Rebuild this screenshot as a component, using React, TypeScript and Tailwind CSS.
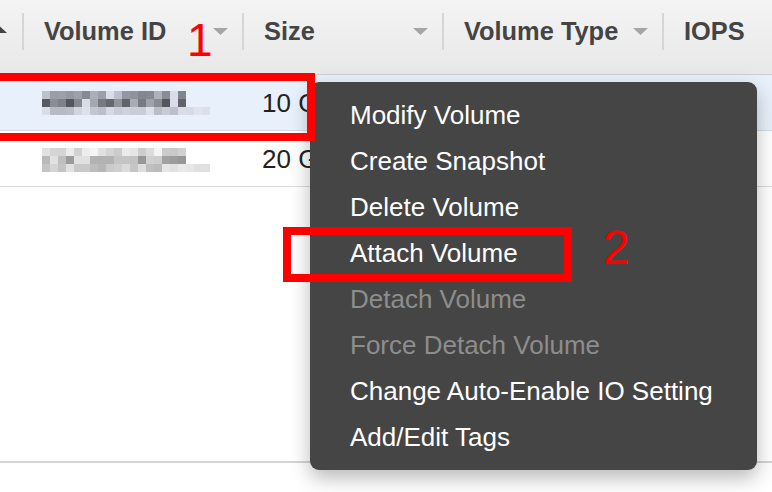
import React from 'react';

type Col = { label: string; width: string; arrow: boolean };

const cols: Col[] = [
  { label: 'Volume ID', width: 'w-[220px]', arrow: true },
  { label: 'Size', width: 'w-[200px]', arrow: true },
  { label: 'Volume Type', width: 'w-[220px]', arrow: true },
  { label: 'IOPS', width: 'w-[110px]', arrow: false },
];

const menu = [
  { label: 'Modify Volume', enabled: true },
  { label: 'Create Snapshot', enabled: true },
  { label: 'Delete Volume', enabled: true },
  { label: 'Attach Volume', enabled: true },
  { label: 'Detach Volume', enabled: false },
  { label: 'Force Detach Volume', enabled: false },
  { label: 'Change Auto-Enable IO Setting', enabled: true },
  { label: 'Add/Edit Tags', enabled: true },
];

// pixelated (redacted) volume id
function Mosaic({ seed, tint }: { seed: number; tint: 'blue' | 'white' }) {
  let s = seed;
  const rand = () => {
    s = (s * 9301 + 49297) % 233280;
    return s / 233280;
  };
  const cell = 8;
  const n = 21;
  // [min, range] of grey level per row
  const bands =
    tint === 'blue'
      ? [
          [135, 70],
          [85, 95],
          [185, 45],
        ]
      : [
          [200, 45],
          [150, 60],
          [175, 60],
        ];
  const bg = tint === 'blue' ? [232, 241, 251] : [255, 255, 255];
  const rects: React.ReactNode[] = [];
  for (let c = 0; c < n; c++) {
    for (let r = 0; r < 3; r++) {
      let g: number;
      if (c >= 18) {
        if (r !== 2) continue;
        g = 222 + rand() * 10;
      } else {
        const [min, range] = bands[r];
        g = min + rand() * range;
        if (rand() < 0.1) g = 225;
      }
      g = Math.round(g);
      const fill =
        tint === 'blue'
          ? `rgb(${Math.round(g * 0.96)},${Math.round(g * 0.98)},${Math.min(g + 6, 255)})`
          : `rgb(${g},${g},${g})`;
      rects.push(
        <rect key={`${c}-${r}`} x={c * cell} y={r * cell} width={cell} height={cell} fill={fill} />
      );
    }
  }
  return (
    <svg width={n * cell} height={3 * cell} className="block" style={{ background: `rgb(${bg.join(',')})` }}>
      {rects}
    </svg>
  );
}

function SortArrow({ up, dark }: { up?: boolean; dark?: boolean }) {
  return (
    <svg width="15" height="7" viewBox="0 0 15 7" className="block">
      <path d={up ? 'M0 7 L7.5 0 L15 7 Z' : 'M0 0 L15 0 L7.5 7 Z'} fill={dark ? '#444' : '#a6a6a6'} />
    </svg>
  );
}

export default function App() {
  return (
    <div
      className="relative w-[772px] h-[492px] overflow-hidden bg-white"
      style={{ fontFamily: '"Liberation Sans", Arial, sans-serif' }}
    >
      {/* Header */}
      <div className="flex h-[75px] items-start pt-[13px] bg-gradient-to-b from-[#f4f4f4] to-[#e8e8e8] border-b border-[#cfcfcf]">
        <div className="w-[22px] h-[37px] flex items-center">
          <div className="-ml-[8px] -mt-[4px]">
            <SortArrow up dark />
          </div>
        </div>
        {cols.map((c) => (
          <div
            key={c.label}
            className={`${c.width} shrink-0 h-[37px] flex items-center border-l-2 border-[#d6d6d6] pl-[20px] pr-[14px]`}
          >
            <span className="text-[25.4px] font-bold text-[#444] leading-none whitespace-nowrap">
              {c.label}
            </span>
            {c.arrow && (
              <span className="ml-auto">
                <SortArrow />
              </span>
            )}
          </div>
        ))}
      </div>

      {/* Rows */}
      <div className="flex h-[56px] items-center bg-[#e8f1fb] border-b border-[#d4dbe3]">
        <div className="w-[42px] shrink-0" />
        <div className="w-[220px] shrink-0">
          <Mosaic seed={17} tint="blue" />
        </div>
        <div className="text-[26px] text-[#222] leading-none">10 GiB</div>
      </div>
      <div className="flex h-[56px] items-center bg-white border-b border-[#dcdcdc]">
        <div className="w-[42px] shrink-0" />
        <div className="w-[220px] shrink-0 pt-[2px]">
          <Mosaic seed={83} tint="white" />
        </div>
        <div className="text-[26px] text-[#222] leading-none">20 GiB</div>
      </div>
      <div className="h-[276px] border-b-2 border-[#d4d4d4]" />

      {/* Context menu */}
      <div className="absolute left-[310px] top-[82px] w-[447px] rounded-[9px] bg-[#454545] py-[10px] shadow-[0_8px_20px_rgba(0,0,0,0.28)]">
        {menu.map((m) => (
          <div
            key={m.label}
            className={`h-[46px] px-[40px] text-[26px] leading-[46px] whitespace-nowrap ${
              m.enabled ? 'text-white' : 'text-[#8d8d8d]'
            }`}
          >
            {m.label}
          </div>
        ))}
      </div>

      {/* Annotations */}
      <div className="absolute left-[-10px] top-[73px] w-[325px] h-[68px] border-[8px] border-[#ff0000]" />
      <div className="absolute left-[187px] top-[17px] text-[46px] leading-none text-[#ff0000]">1</div>
      <div className="absolute left-[283px] top-[227px] w-[289px] h-[55px] border-[8px] border-[#ff0000]" />
      <div className="absolute left-[603px] top-[224px] text-[48px] leading-none text-[#ff0000]">2</div>
    </div>
  );
}
